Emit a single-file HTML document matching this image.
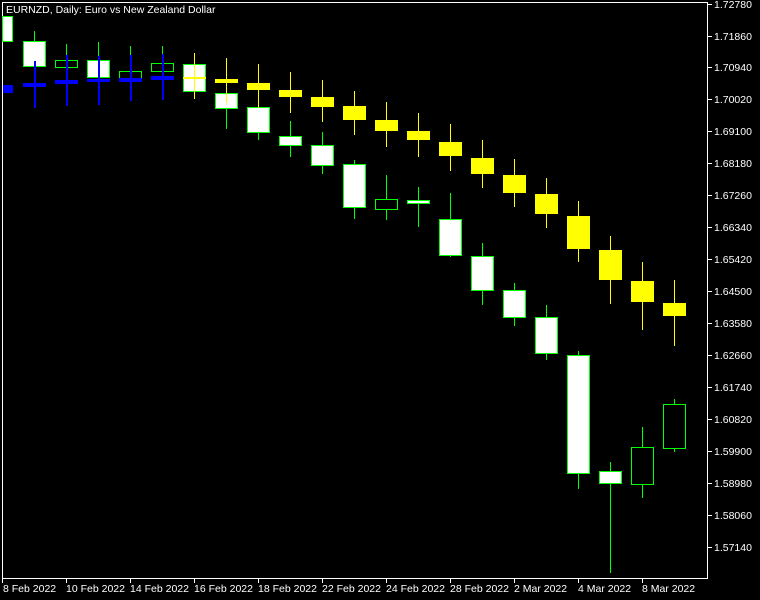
<!DOCTYPE html>
<html><head><style>
html,body{margin:0;padding:0;background:#000;}
svg{display:block;}
text{font-family:"Liberation Sans","DejaVu Sans",sans-serif;font-size:10.5px;fill:#fff;}
</style></head><body>
<svg width="760" height="600" viewBox="0 0 760 600" xmlns="http://www.w3.org/2000/svg" shape-rendering="crispEdges">
<rect width="760" height="600" fill="#000"/>
<!-- frame -->
<rect x="2.5" y="2.5" width="705" height="576" fill="none" stroke="#fff" stroke-width="1"/>
<!-- main candles (green outline) -->
<g stroke="#00ff00" stroke-width="1">
<line x1="34.5" y1="31" x2="34.5" y2="108"/>
<line x1="66.5" y1="44" x2="66.5" y2="106"/>
<line x1="98.5" y1="42" x2="98.5" y2="105"/>
<line x1="130.5" y1="46" x2="130.5" y2="101"/>
<line x1="162.5" y1="46" x2="162.5" y2="100"/>
<line x1="226.5" y1="108" x2="226.5" y2="129"/>
<line x1="258.5" y1="132" x2="258.5" y2="140"/>
<line x1="290.5" y1="121" x2="290.5" y2="157"/>
<line x1="322.5" y1="132" x2="322.5" y2="174"/>
<line x1="354.5" y1="160" x2="354.5" y2="219"/>
<line x1="386.5" y1="175" x2="386.5" y2="220"/>
<line x1="418.5" y1="187" x2="418.5" y2="227"/>
<line x1="450.5" y1="193" x2="450.5" y2="257"/>
<line x1="482.5" y1="243" x2="482.5" y2="305"/>
<line x1="514.5" y1="283" x2="514.5" y2="326"/>
<line x1="546.5" y1="305" x2="546.5" y2="360"/>
<line x1="578.5" y1="351" x2="578.5" y2="489"/>
<line x1="610.5" y1="462" x2="610.5" y2="573"/>
<line x1="642.5" y1="427" x2="642.5" y2="498"/>
<line x1="674.5" y1="399" x2="674.5" y2="452"/>
</g>
<g stroke="#00ff00" stroke-width="1" fill="#fff">
<rect x="2.5" y="16.5" width="10" height="25"/>
<rect x="23.5" y="41.5" width="22" height="25"/>
<rect x="55.5" y="60.5" width="22" height="7" fill="#000"/>
<rect x="87.5" y="60.5" width="22" height="17"/>
<rect x="119.5" y="71.5" width="22" height="7" fill="#000"/>
<rect x="151.5" y="63.5" width="22" height="8" fill="#000"/>
<rect x="183.5" y="64.5" width="22" height="27"/>
<rect x="215.5" y="93.5" width="22" height="15"/>
<rect x="247.5" y="107.5" width="22" height="25"/>
<rect x="279.5" y="136.5" width="22" height="9"/>
<rect x="311.5" y="145.5" width="22" height="20"/>
<rect x="343.5" y="164.5" width="22" height="43"/>
<rect x="375.5" y="199.5" width="22" height="10" fill="#000"/>
<rect x="407.5" y="200.5" width="22" height="3"/>
<rect x="439.5" y="219.5" width="22" height="36"/>
<rect x="471.5" y="256.5" width="22" height="34"/>
<rect x="503.5" y="290.5" width="22" height="27"/>
<rect x="535.5" y="317.5" width="22" height="36"/>
<rect x="567.5" y="355.5" width="22" height="118"/>
<rect x="599.5" y="471.5" width="22" height="12"/>
<rect x="631.5" y="447.5" width="22" height="37" fill="#000"/>
<rect x="663.5" y="404.5" width="22" height="44" fill="#000"/>
</g>
<!-- blue candles -->
<g fill="#0000ff">
<rect x="3" y="85" width="10" height="8"/>
<rect x="34" y="61" width="2" height="47"/><rect x="23" y="83" width="23" height="4"/>
<rect x="66" y="55" width="2" height="51"/><rect x="55" y="80" width="23" height="4"/>
<rect x="98" y="56" width="2" height="49"/><rect x="87" y="79" width="23" height="3"/>
<rect x="130" y="55" width="2" height="46"/><rect x="119" y="78" width="23" height="4"/>
<rect x="162" y="54" width="2" height="46"/><rect x="151" y="76" width="23" height="4"/>
</g>
<!-- yellow candles -->
<g fill="#ffff00">
<rect x="194" y="53" width="1" height="46"/><rect x="183" y="77" width="23" height="2"/>
<rect x="226" y="58" width="1" height="45"/><rect x="215" y="79" width="23" height="4"/>
<rect x="258" y="64" width="1" height="44"/><rect x="247" y="83" width="23" height="7"/>
<rect x="290" y="72" width="1" height="41"/><rect x="279" y="90" width="23" height="7"/>
<rect x="322" y="80" width="1" height="42"/><rect x="311" y="97" width="23" height="10"/>
<rect x="354" y="91" width="1" height="44"/><rect x="343" y="106" width="23" height="14"/>
<rect x="386" y="102" width="1" height="45"/><rect x="375" y="120" width="23" height="11"/>
<rect x="418" y="113" width="1" height="44"/><rect x="407" y="131" width="23" height="9"/>
<rect x="450" y="124" width="1" height="47"/><rect x="439" y="142" width="23" height="14"/>
<rect x="482" y="140" width="1" height="48"/><rect x="471" y="158" width="23" height="16"/>
<rect x="514" y="159" width="1" height="48"/><rect x="503" y="175" width="23" height="18"/>
<rect x="546" y="178" width="1" height="50"/><rect x="535" y="194" width="23" height="20"/>
<rect x="578" y="201" width="1" height="61"/><rect x="567" y="216" width="23" height="33"/>
<rect x="610" y="236" width="1" height="68"/><rect x="599" y="250" width="23" height="30"/>
<rect x="642" y="262" width="1" height="68"/><rect x="631" y="281" width="23" height="21"/>
<rect x="674" y="280" width="1" height="66"/><rect x="663" y="303" width="23" height="13"/>
</g>
<text x="6" y="13">EURNZD, Daily:  Euro vs New Zealand Dollar</text>
<!-- price axis -->
<g stroke="#fff" stroke-width="1">
<line x1="708" y1="4.5" x2="712" y2="4.5"/><line x1="708" y1="36.5" x2="712" y2="36.5"/>
<line x1="708" y1="67.5" x2="712" y2="67.5"/><line x1="708" y1="99.5" x2="712" y2="99.5"/>
<line x1="708" y1="131.5" x2="712" y2="131.5"/><line x1="708" y1="163.5" x2="712" y2="163.5"/>
<line x1="708" y1="195.5" x2="712" y2="195.5"/><line x1="708" y1="227.5" x2="712" y2="227.5"/>
<line x1="708" y1="259.5" x2="712" y2="259.5"/><line x1="708" y1="291.5" x2="712" y2="291.5"/>
<line x1="708" y1="323.5" x2="712" y2="323.5"/><line x1="708" y1="355.5" x2="712" y2="355.5"/>
<line x1="708" y1="387.5" x2="712" y2="387.5"/><line x1="708" y1="419.5" x2="712" y2="419.5"/>
<line x1="708" y1="451.5" x2="712" y2="451.5"/><line x1="708" y1="483.5" x2="712" y2="483.5"/>
<line x1="708" y1="515.5" x2="712" y2="515.5"/><line x1="708" y1="547.5" x2="712" y2="547.5"/>
</g>
<g>
<text x="714" y="8">1.72780</text><text x="714" y="40">1.71860</text>
<text x="714" y="71">1.70940</text><text x="714" y="103">1.70020</text>
<text x="714" y="135">1.69100</text><text x="714" y="167">1.68180</text>
<text x="714" y="199">1.67260</text><text x="714" y="231">1.66340</text>
<text x="714" y="263">1.65420</text><text x="714" y="295">1.64500</text>
<text x="714" y="327">1.63580</text><text x="714" y="359">1.62660</text>
<text x="714" y="391">1.61740</text><text x="714" y="423">1.60820</text>
<text x="714" y="455">1.59900</text><text x="714" y="487">1.58980</text>
<text x="714" y="519">1.58060</text><text x="714" y="551">1.57140</text>
</g>
<!-- time axis -->
<g stroke="#fff" stroke-width="1">
<line x1="2.5" y1="579" x2="2.5" y2="583"/><line x1="66.5" y1="579" x2="66.5" y2="583"/>
<line x1="130.5" y1="579" x2="130.5" y2="583"/><line x1="194.5" y1="579" x2="194.5" y2="583"/>
<line x1="258.5" y1="579" x2="258.5" y2="583"/><line x1="322.5" y1="579" x2="322.5" y2="583"/>
<line x1="386.5" y1="579" x2="386.5" y2="583"/><line x1="450.5" y1="579" x2="450.5" y2="583"/>
<line x1="514.5" y1="579" x2="514.5" y2="583"/><line x1="578.5" y1="579" x2="578.5" y2="583"/>
<line x1="642.5" y1="579" x2="642.5" y2="583"/>
</g>
<g>
<text x="3" y="592">8 Feb 2022</text><text x="66" y="592">10 Feb 2022</text>
<text x="130" y="592">14 Feb 2022</text><text x="194" y="592">16 Feb 2022</text>
<text x="258" y="592">18 Feb 2022</text><text x="322" y="592">22 Feb 2022</text>
<text x="386" y="592">24 Feb 2022</text><text x="450" y="592">28 Feb 2022</text>
<text x="514" y="592">2 Mar 2022</text><text x="578" y="592">4 Mar 2022</text>
<text x="642" y="592">8 Mar 2022</text>
</g>
</svg>
</body></html>
